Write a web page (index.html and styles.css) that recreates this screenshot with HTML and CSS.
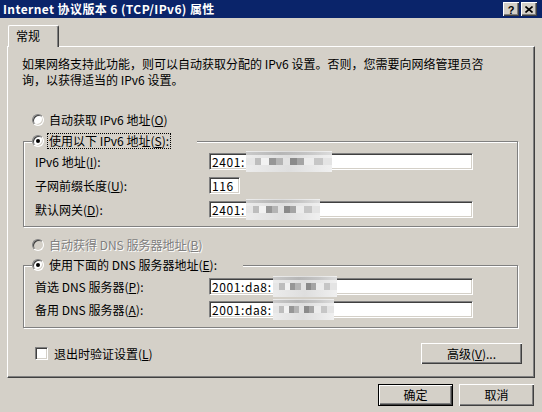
FILE: index.html
```html
<!DOCTYPE html>
<html lang="zh-CN">
<head>
<meta charset="UTF-8">
<title>Internet 协议版本 6 (TCP/IPv6) 属性</title>
<link rel="stylesheet" href="styles.css">
</head>
<body>
<div class="window">
  <div class="titlebar">
    <span class="title">Internet 协议版本 6 (TCP/IPv6) 属性</span>
    <div class="caption-buttons">
      <span class="cap-btn help">?</span>
      <span class="cap-btn">
        <svg width="8" height="7" viewBox="0 0 8 7"><path d="M0.5 0.5 L7.5 6.5 M7.5 0.5 L0.5 6.5" stroke="#000" stroke-width="1.6"/></svg>
      </span>
    </div>
  </div>

  <div class="tabs">
    <div class="tab">常规</div>
  </div>

  <div class="panel">
    <p class="intro">如果网络支持此功能，则可以自动获取分配的 IPv6 设置。否则，您需要向网络管理员咨<br>询，以获得适当的 IPv6 设置。</p>

    <div class="option"><span class="radio"></span>自动获取 IPv6 地址(<u>O</u>)</div>

    <div class="group group-ip">
      <div class="group-head head-ip"><span class="radio checked"></span><span class="focus">使用以下 IPv6 地址(<u>S</u>):</span></div>
      <div class="fields">
        <span class="label">IPv6 地址(<u>I</u>):</span>
        <div class="input wide">2401:<span class="blur blur-a"></span></div>
        <span class="label">子网前缀长度(<u>U</u>):</span>
        <div class="input small">116</div>
        <span class="label">默认网关(<u>D</u>):</span>
        <div class="input wide">2401:<span class="blur blur-b"></span></div>
      </div>
    </div>

    <div class="option disabled"><span class="radio off"></span>自动获得 DNS 服务器地址(<u>B</u>)</div>

    <div class="group group-dns">
      <div class="group-head head-dns"><span class="radio checked"></span><span>使用下面的 DNS 服务器地址(<u>E</u>):</span></div>
      <div class="fields dns">
        <span class="label">首选 DNS 服务器(<u>P</u>):</span>
        <div class="input wide">2001:da8:<span class="blur blur-c"></span></div>
        <span class="label">备用 DNS 服务器(<u>A</u>):</span>
        <div class="input wide">2001:da8:<span class="blur blur-d"></span></div>
      </div>
    </div>

    <div class="panel-footer">
      <div class="check-row"><span class="checkbox"></span>退出时验证设置(<u>L</u>)</div>
      <div class="btn advanced">高级(<u>V</u>)...</div>
    </div>
  </div>

  <div class="dialog-buttons">
    <div class="btn default">确定</div>
    <div class="btn">取消</div>
  </div>
</div>
</body>
</html>
```

FILE: styles.css
```css
body {
  margin: 0;
  width: 542px;
  height: 412px;
  overflow: hidden;
  background-color: #d4d0c8;
  font-family: "Noto Sans CJK SC", sans-serif;
  font-size: 12px;
  color: #000;
}

u {
  text-decoration-thickness: 1px;
  text-underline-offset: 1px;
}

.window {
  display: flex;
  flex-direction: column;
}

/* title bar */
.titlebar {
  height: 18px;
  background-color: #0a246a;
  color: #fff;
  display: flex;
  align-items: center;
  justify-content: space-between;
  padding: 0 5px 0 3px;
}

.title {
  font-weight: bold;
  letter-spacing: 0.4px;
  line-height: 18px;
}

.caption-buttons {
  display: flex;
  gap: 2px;
}

.cap-btn {
  box-sizing: border-box;
  width: 16px;
  height: 14px;
  background-color: #d4d0c8;
  box-shadow: inset 1px 1px #fff, inset -1px -1px #404040, inset -2px -2px #808080;
  display: flex;
  align-items: center;
  justify-content: center;
  color: #000;
}

.cap-btn.help {
  font-family: "Liberation Sans", sans-serif;
  font-weight: bold;
  font-size: 11px;
  line-height: 14px;
  padding-top: 1px;
}

/* tab strip */
.tabs {
  display: flex;
  padding-left: 8px;
  margin-top: 7px;
}

.tab {
  box-sizing: border-box;
  width: 51px;
  height: 22px;
  margin-bottom: -1px;
  position: relative;
  z-index: 1;
  background-color: #d4d0c8;
  border-top: 1px solid #fff;
  border-left: 1px solid #fff;
  border-right: 1px solid #404040;
  border-radius: 2px 2px 0 0;
  box-shadow: inset -1px 0 #808080;
  padding: 3px 0 0 7px;
  line-height: 14px;
}

.panel {
  box-sizing: border-box;
  width: 528px;
  height: 332px;
  margin-left: 7px;
  border-top: 1px solid #fff;
  border-left: 1px solid #fff;
  border-right: 1px solid #404040;
  border-bottom: 1px solid #404040;
  box-shadow: inset -1px -1px #808080;
  display: flex;
  flex-direction: column;
}

.intro {
  margin: 9px 0 0 14px;
  line-height: 16px;
  white-space: nowrap;
}

.option {
  display: flex;
  align-items: center;
  height: 14px;
  margin: 25px 0 0 24px;
  line-height: 14px;
}

.option.disabled {
  margin-top: 11px;
  color: #808080;
  text-shadow: 1px 1px #fff;
}

.radio {
  box-sizing: border-box;
  width: 12px;
  height: 12px;
  border-radius: 50%;
  background-color: #fff;
  border: 1px solid;
  border-color: #808080 #fff #fff #808080;
  box-shadow: inset 1px 1px #404040, inset -1px -1px #d4d0c8;
  margin-right: 5px;
  flex: none;
  display: flex;
  align-items: center;
  justify-content: center;
}

.radio.off {
  background-color: #d4d0c8;
}

.radio.checked::after {
  content: "";
  width: 4px;
  height: 4px;
  border-radius: 50%;
  background-color: #000;
}

/* etched group boxes */
.group {
  box-sizing: border-box;
  width: 495px;
  margin-left: 15px;
  border: 1px solid #808080;
  box-shadow: inset 1px 1px #fff, 1px 1px #fff;
}

.group-ip {
  margin-top: 14px;
  padding-bottom: 8px;
}

.group-dns {
  margin-top: 13px;
  padding-bottom: 9px;
}

.group-head {
  display: flex;
  align-items: center;
  height: 14px;
  margin: -8px 0 0 8px;
  background-color: #d4d0c8;
  line-height: 14px;
}

.head-ip {
  width: 165px;
}

.head-dns {
  width: 211px;
}

.focus {
  outline: 1px dotted #000;
  outline-offset: 0;
  padding: 0 1px;
  margin-left: -1px;
}

.fields {
  display: grid;
  grid-template-columns: 174px auto;
  row-gap: 7px;
  align-items: center;
  justify-items: start;
  margin: 5px 0 0 11px;
}

.fields.dns {
  row-gap: 6px;
  margin-top: 6px;
}

.label {
  line-height: 14px;
}

.input {
  box-sizing: border-box;
  height: 17px;
  background-color: #fff;
  border: 1px solid;
  border-color: #808080 #fff #fff #808080;
  box-shadow: inset 1px 1px #404040, inset -1px -1px #d4d0c8;
  display: flex;
  align-items: center;
  padding-left: 2px;
  letter-spacing: 0.6px;
  line-height: 14px;
}

.input.wide {
  width: 264px;
}

.input.small {
  width: 31px;
}

/* pixelated redaction over the addresses */
.blur {
  flex: none;
  height: 21px;
  margin-left: 1px;
  background:
    linear-gradient(to right, #e6e6e6 0 10%, #bdbdbd 10% 18%, #f2f2f2 18% 27%, #969696 27% 35%, #b4b4b4 35% 43%, #e2e2e2 43% 51%, #8a8a8a 51% 59%, #a4a4a4 59% 67%, #ececec 67% 79%, #c6c6c6 79% 89%, #e4e4e4 89%) 0 7px / 100% 7px no-repeat,
    linear-gradient(to right, #cacaca, #b6b6b6 40%, #c4c4c4 70%, #dcdcdc) 0 1px / 100% 3px no-repeat,
    linear-gradient(to right, #ececec, #dedede 50%, #f0f0f0);
}

.blur-a { width: 86px; }
.blur-b { width: 74px; }
.blur-c { width: 64px; }
.blur-d { width: 61px; }

.panel-footer {
  display: flex;
  align-items: center;
  justify-content: space-between;
  margin: 15px 12px 0 27px;
}

.check-row {
  display: flex;
  align-items: center;
  line-height: 14px;
}

.checkbox {
  box-sizing: border-box;
  width: 13px;
  height: 13px;
  background-color: #fff;
  border: 1px solid;
  border-color: #808080 #fff #fff #808080;
  box-shadow: inset 1px 1px #404040, inset -1px -1px #d4d0c8;
  margin-right: 6px;
}

/* push buttons */
.btn {
  box-sizing: border-box;
  width: 75px;
  height: 22px;
  background-color: #d4d0c8;
  box-shadow: inset 1px 1px #fff, inset -1px -1px #404040, inset -2px -2px #808080;
  display: flex;
  align-items: center;
  justify-content: center;
  line-height: 14px;
}

.btn.advanced {
  width: 101px;
  height: 21px;
}

.btn.default {
  border: 1px solid #000;
}

.dialog-buttons {
  display: flex;
  justify-content: flex-end;
  gap: 6px;
  margin: 6px 8px 0 0;
}
```
